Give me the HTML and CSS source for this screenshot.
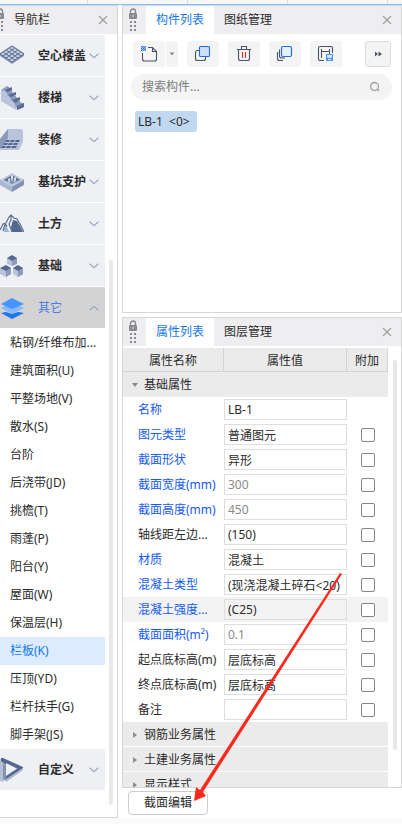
FILE: index.html
```html
<!DOCTYPE html>
<html lang="zh-CN">
<head>
<meta charset="utf-8">
<meta name="viewport" content="width=device-width, initial-scale=1">
<title>构件与属性</title>
<link rel="stylesheet" href="styles.css">
</head>
<body>
<svg class="defs" aria-hidden="true">
  <symbol id="lock" viewBox="0 0 10 24">
    <path d="M2.500 6V3.500a2.500 2.500 0 0 1 5 0V6" fill="none" stroke="#888a8d" stroke-width="1.400"/>
    <rect x="1" y="5" width="8" height="6" rx="1" fill="#888a8d"/>
    <rect x="4.500" y="7" width="1" height="2" fill="#eee"/>
    <path d="M2 13h2v2H2zM6 13h2v2H6zM2 17h2v2H2zM6 17h2v2H6zM2 21h2v2H2zM6 21h2v2H6z" fill="#888a8d"/>
  </symbol>
  <symbol id="close" viewBox="0 0 10 10"><path d="M1 1l8 8M9 1L1 9" fill="none" stroke="#a0a0a0" stroke-width="1.300"/></symbol>
  <symbol id="chevron" viewBox="0 0 10 6"><path d="M.6 .8L5 4.800 9.400 .8" fill="none" stroke="#9ba9c1" stroke-width="1.200"/></symbol>
</svg>
<div class="ribbon"><i></i><i></i><i></i><i></i></div>
<main class="workspace">
  <nav class="panel nav">
    <header class="bar nav-bar">
      <svg class="lock" aria-hidden="true"><use href="#lock"/></svg>
      <h2>导航栏</h2>
      <button class="close" aria-label="关闭导航栏"><svg><use href="#close"/></svg></button>
    </header>
    <div class="nav-body">
      <div class="nav-list">
        <button class="category">
          <svg class="pic" viewBox="0 0 24 24"><path d="M0 10v2l12 8 12-8v-2z" fill="#8b9bbb"/><path d="M0 10l12-8 12 8-12 8z" fill="#d3dbe9"/><path d="M0 10l12-8M3 12l12-8M6 14l12-8M9 16l12-8M12 18l12-8M12 2l12 8M9 4l12 8M6 6l12 8M3 8l12 8M0 10l12 8" fill="none" stroke="#647599" stroke-width="1.200"/></svg>
          <span>空心楼盖</span><svg class="chev"><use href="#chevron"/></svg></button>
        <button class="category">
          <svg class="pic" viewBox="0 0 24 24"><path d="M1 4l4-1 3 5 4 2 1 4 4 1 1 5-2 4L1 15z" fill="#b9c4da"/><path d="M5 3l7 1v3l-4 3zM8 9l8 1v3l-4 2zM13 14l7 1v3l-4 3zM17 21l7-3v3l-7 3z" fill="#8b9bbb"/><path d="M1 4l6-4 5 3-5 3-2-1zM7 9l5-3 4 2-5 3zM11 14l5-3 4 2-5 3zM15 20l5-4 4 2-6 4z" fill="#8b9bbb"/><path d="M5 4l7-3v3L7 6zM8 9l8-3v3l-5 2zM12 14l8-3v3l-5 3zM17 20l7-3v4l-7 3z" fill="#586b91"/></svg>
          <span>楼梯</span><svg class="chev"><use href="#chevron"/></svg></button>
        <button class="category">
          <svg class="pic" viewBox="0 0 24 24"><path d="M8 1h14l1 2v11l-4 8H0V11z" fill="#b9c4da"/><path d="M8 1v9L0 21V11z" fill="#8b9bbb"/><path d="M6 12h4l-1 2H5zM11 12h4l-1 2h-4zM16 12h4l-1 2h-4zM4 15h4l-1 2H3zM9 15h4l-1 2H8zM14 15h4l-1 2h-4zM2 18h4l-1 2H1zM7 18h4l-1 2H6zM12 18h5l-1 2h-5z" fill="#53678f"/></svg>
          <span>装修</span><svg class="chev"><use href="#chevron"/></svg></button>
        <button class="category">
          <svg class="pic" viewBox="0 0 24 24"><path d="M0 9v6l12 7V14z" fill="#aab7d0"/><path d="M24 9v6l-12 7V14z" fill="#8292b3"/><path d="M0 10l12-7 12 7-12 7z" fill="#bcc8dc"/><path d="M4 10l8-5 8 5-8 4z" fill="#586b91"/><path d="M8 9l2-1v4l-2 1zM11 6l2-1v5l-2 1zM14 8l2-1v4l-2 2z" fill="#e4eaf4"/><path d="M6 11l6-3 6 3-6 3z" fill="#a0aec9" opacity=".6"/></svg>
          <span>基坑支护</span><svg class="chev"><use href="#chevron"/></svg></button>
        <button class="category">
          <svg class="pic" viewBox="0 0 24 24"><path d="M13 8l4 1 3 5 3 6H12l-1-5z" fill="#53678f"/><path d="M5 12l2 2 1 4 2 2H4z" fill="#a5b2cc"/><path d="M0 18l3-6 3-1 3-6 2-2 3 3 3 1 3 5 4 8M3 19l2-7 2 2M11 4v4l-2 4 3 8" fill="none" stroke="#53678f" stroke-width="1.100"/></svg>
          <span>土方</span><svg class="chev"><use href="#chevron"/></svg></button>
        <button class="category">
          <svg class="pic" viewBox="0 0 24 24"><path d="M7 4l5-2 5 2v6l-5 2-5-2zM0 14l6-2 5 2v6l-5 3-6-3zM13 14l5-2 5 2v6l-5 3-5-3z" fill="#b9c4da"/><path d="M12 7l5-3v6l-5 2zM6 17l5-3v6l-5 3zM18 17l5-3v6l-5 3z" fill="#8c9bbb"/><path d="M7 4l5-3 5 3-5 3zM0 14l6-3 5 3-5 3zM13 14l5-3 5 3-5 3z" fill="#53678f"/></svg>
          <span>基础</span><svg class="chev"><use href="#chevron"/></svg></button>
        <button class="category open" aria-expanded="true">
          <svg class="pic" viewBox="0 0 24 24"><path d="M1 17l5-1 6 2 6-2 6 1-12 6z" fill="#1b74f0"/><path d="M1 12l11-6 12 6-12 6z" fill="#83b9fb"/><path d="M1 8l11-6 12 6-12 5z" fill="#4496fb"/></svg>
          <span>其它</span><svg class="chev"><use href="#chevron"/></svg></button>
        <ul class="items">
          <li><a href="#">粘钢/纤维布加...</a></li>
          <li><a href="#">建筑面积(U)</a></li>
          <li><a href="#">平整场地(V)</a></li>
          <li><a href="#">散水(S)</a></li>
          <li><a href="#">台阶</a></li>
          <li><a href="#">后浇带(JD)</a></li>
          <li><a href="#">挑檐(T)</a></li>
          <li><a href="#">雨蓬(P)</a></li>
          <li><a href="#">阳台(Y)</a></li>
          <li><a href="#">屋面(W)</a></li>
          <li><a href="#">保温层(H)</a></li>
          <li><a href="#" class="current">栏板(K)</a></li>
          <li><a href="#">压顶(YD)</a></li>
          <li><a href="#">栏杆扶手(G)</a></li>
          <li><a href="#">脚手架(JS)</a></li>
        </ul>
        <button class="category">
          <svg class="pic" viewBox="0 0 24 24"><path d="M0 1l6 5v13l-3 5-3-1z" fill="#b4c0d6"/><path d="M3 6l3 2v15l-3-2z" fill="#8292b3"/><path d="M1 0h2l20 9v1l-5 1L6 5v2L1 3z" fill="#53678f"/><path d="M6 18l12-8 5-1v1L6 22z" fill="#53678f"/><path d="M6 21l17-11v2L6 24z" fill="#a9b6ce"/></svg>
          <span>自定义</span><svg class="chev"><use href="#chevron"/></svg></button>
      </div>
      <div class="track nav-track"></div>
    </div>
  </nav>
  <div class="column">
    <section class="panel components">
      <header class="bar">
        <svg class="lock" aria-hidden="true"><use href="#lock"/></svg>
        <button class="tab active">构件列表</button>
        <button class="tab">图纸管理</button>
        <button class="close" aria-label="关闭构件列表"><svg><use href="#close"/></svg></button>
      </header>
      <div class="tools">
        <div class="split">
          <button class="tool" aria-label="新建"><svg viewBox="0 0 18 18"><path d="M2.500 8v6a2 2 0 0 0 2 2h10a2 2 0 0 0 2-2V6.500l-4-4H8M12.500 2.500v4h4" fill="none" stroke="#4b5467" stroke-width="1.100"/><path d="M1 1h5v5H1z" fill="#a9cbf8"/><path d="M1 1h1v1H1zM3 1h1v1H3zM5 1h1v1H5zM2 2h1v1H2zM4 2h1v1H4zM1 3h1v1H1zM3 3h1v1H3zM5 3h1v1H5zM2 4h1v1H2zM4 4h1v1H4zM1 5h1v1H1zM3 5h1v1H3zM5 5h1v1H5z" fill="#1d6fe8"/></svg></button>
          <button class="tool drop" aria-label="新建选项"><svg viewBox="0 0 6 4"><path d="M.5 .5h5L3 3.500z" fill="#8a8a8a"/></svg></button>
        </div>
        <button class="tool" aria-label="复制"><svg viewBox="0 0 18 18"><path d="M5 5.500H3.500a2 2 0 0 0-2 2v6a2 2 0 0 0 2 2h6a2 2 0 0 0 2-2V12" fill="none" stroke="#4b5467" stroke-width="1.100"/><rect x="5.500" y="1.500" width="10" height="10" rx="1" fill="#cfe0f8" stroke="#1d6fe8" stroke-width="1.100"/></svg></button>
        <button class="tool" aria-label="删除"><svg viewBox="0 0 18 18"><path d="M2 4.500h14M6.500 4V1.500h5V4M3.500 5v8.500a2 2 0 0 0 2 2h7a2 2 0 0 0 2-2V5" fill="none" stroke="#4b5467" stroke-width="1.100"/><path d="M7.500 7v6M10.500 7v6" stroke="#ea2b2b" stroke-width="1.100"/></svg></button>
        <button class="tool" aria-label="层间复制"><svg viewBox="0 0 18 18"><path d="M3.500 4.500v6.500a2 2 0 0 0 2 2H9M1.500 7v6.500a2 2 0 0 0 2 2H7" fill="none" stroke="#4b5467" stroke-width="1.100"/><rect x="5.500" y="1.500" width="10" height="10" rx="1.500" fill="#e6f1ff" stroke="#1d6fe8" stroke-width="1.200"/></svg></button>
        <button class="tool" aria-label="存档"><svg viewBox="0 0 18 18"><path d="M7 15.500H3A1.500 1.500 0 0 1 1.500 14V3A1.500 1.500 0 0 1 3 1.500h11A1.500 1.500 0 0 1 15.500 3v5M4.500 4v9M12.500 4v5M4.500 6.500h8" fill="none" stroke="#4b5467" stroke-width="1.100"/><path d="M9 9h7v7H9z" fill="#4c94f5"/><path d="M10 10h5v2l-1 1h-3l-1-1z" fill="#d5e6fc"/><path d="M11 14h3v1h-3z" fill="#e6f1ff"/></svg></button>
        <button class="tool more" aria-label="更多"><svg viewBox="0 0 18 18"><path d="M6 6.500L9 9l-3 2.500zM9.500 6.500l3.500 2.500-3.500 2.500z" fill="#4b5467"/></svg></button>
      </div>
      <label class="search">
        <input type="text" placeholder="搜索构件..." aria-label="搜索构件">
        <svg viewBox="0 0 12 12"><circle cx="5.500" cy="5.500" r="4" fill="none" stroke="#a3a3a3" stroke-width="1.300"/><path d="M8 8l2 2" stroke="#a3a3a3" stroke-width="1.500"/></svg>
      </label>
      <button class="component">LB-1&nbsp; &lt;0&gt;</button>
    </section>
    <section class="panel properties">
      <header class="bar">
        <svg class="lock" aria-hidden="true"><use href="#lock"/></svg>
        <button class="tab active">属性列表</button>
        <button class="tab">图层管理</button>
        <button class="close" aria-label="关闭属性列表"><svg><use href="#close"/></svg></button>
      </header>
      <div class="sheet">
        <table>
          <colgroup><col class="c-name"><col><col class="c-extra"></colgroup>
          <thead><tr><th>属性名称</th><th>属性值</th><th>附加</th></tr></thead>
          <tbody>
            <tr class="group open"><td colspan="3"><button>基础属性</button></td></tr>
            <tr class="key"><td><label for="p1">名称</label></td><td><input type="text" id="p1" value="LB-1"></td><td></td></tr>
            <tr class="key"><td><label for="p2">图元类型</label></td><td><input type="text" id="p2" value="普通图元"></td><td><input type="checkbox" aria-label="附加图元类型"></td></tr>
            <tr class="key"><td><label for="p3">截面形状</label></td><td><input type="text" id="p3" value="异形"></td><td><input type="checkbox" aria-label="附加截面形状"></td></tr>
            <tr class="key"><td><label for="p4">截面宽度(mm)</label></td><td><input type="text" id="p4" value="300" readonly></td><td><input type="checkbox" aria-label="附加截面宽度"></td></tr>
            <tr class="key"><td><label for="p5">截面高度(mm)</label></td><td><input type="text" id="p5" value="450" readonly></td><td><input type="checkbox" aria-label="附加截面高度"></td></tr>
            <tr><td><label for="p6">轴线距左边...</label></td><td><input type="text" id="p6" value="(150)"></td><td><input type="checkbox" aria-label="附加轴线距左边"></td></tr>
            <tr class="key"><td><label for="p7">材质</label></td><td><input type="text" id="p7" value="混凝土"></td><td><input type="checkbox" aria-label="附加材质"></td></tr>
            <tr class="key"><td><label for="p8">混凝土类型</label></td><td><input type="text" id="p8" value="(现浇混凝土碎石&lt;20)"></td><td><input type="checkbox" aria-label="附加混凝土类型"></td></tr>
            <tr class="key hover"><td><label for="p9">混凝土强度...</label></td><td><input type="text" id="p9" value="(C25)"></td><td><input type="checkbox" aria-label="附加混凝土强度"></td></tr>
            <tr class="key"><td><label for="p10">截面面积(m²)</label></td><td><input type="text" id="p10" value="0.1" readonly></td><td><input type="checkbox" aria-label="附加截面面积"></td></tr>
            <tr><td><label for="p11">起点底标高(m)</label></td><td><input type="text" id="p11" value="层底标高"></td><td><input type="checkbox" aria-label="附加起点底标高"></td></tr>
            <tr><td><label for="p12">终点底标高(m)</label></td><td><input type="text" id="p12" value="层底标高"></td><td><input type="checkbox" aria-label="附加终点底标高"></td></tr>
            <tr><td><label for="p13">备注</label></td><td><input type="text" id="p13" value=""></td><td><input type="checkbox" aria-label="附加备注"></td></tr>
            <tr class="group"><td colspan="3"><button>钢筋业务属性</button></td></tr>
            <tr class="group"><td colspan="3"><button>土建业务属性</button></td></tr>
            <tr class="group"><td colspan="3"><button>显示样式</button></td></tr>
          </tbody>
        </table>
        <div class="track sheet-track"></div>
      </div>
    </section>
    <footer class="actions"><button>截面编辑</button></footer>
  </div>
</main>
<div class="status"></div>
<svg class="arrow" viewBox="0 0 150 232" aria-hidden="true"><path d="M147 1l2 1L10 220l3 4L1 229l2-14 4 3z" fill="#fb2a1c"/></svg>
</body>
</html>
```

FILE: styles.css
```css
* { box-sizing: border-box; }

body {
  position: relative;
  display: flex;
  flex-direction: column;
  height: 100vh;
  margin: 0;
  overflow: hidden;
  background: #fff;
  color: #2b2b2b;
  font: 12px/20px "Noto Sans", "Noto Sans CJK SC", sans-serif;
}

button, input {
  margin: 0;
  padding: 0;
  border: 0;
  background: none;
  color: inherit;
  font: inherit;
}

svg { display: block; flex: none; }
.defs { position: absolute; width: 0; height: 0; }

.ribbon {
  display: flex;
  flex: none;
  height: 5px;
  border-bottom: 1px solid #86bdf4;
  background: #f3f8fc;
}
.ribbon i { flex: 0 0 100px; border-right: 1px solid #d5dce2; }
.ribbon i:first-child { flex-basis: 88px; }

.workspace { display: flex; flex: 1; gap: 4px; min-height: 0; }
.panel { border: 1px solid #d6d6d6; }

.bar {
  display: flex;
  flex: none;
  align-items: center;
  height: 28px;
  background: #eeeef0;
}
.lock { width: 10px; height: 24px; margin: 0 8px 0 5px; }
.close { margin-left: auto; padding: 0 9px; }
.close svg { width: 10px; height: 10px; }
.tab { align-self: stretch; padding: 0 10px; }
.tab.active { background: #fff; color: #1677ea; }

/* navigation */
.nav {
  display: flex;
  flex: 0 0 118px;
  flex-direction: column;
  border-left: 0;
  overflow: hidden;
}
.nav-bar .lock { margin: 0 9px 0 -5px; }
.nav-bar h2 { margin: 0; font-size: 12px; font-weight: 400; }
.nav-body { display: flex; flex: 1; padding-top: 1px; min-height: 0; }
.nav-list { flex: 0 0 105px; }
.category {
  display: flex;
  align-items: center;
  width: 100%;
  height: 41px;
  margin-bottom: 1px;
  background: #eff0f4;
  font-weight: 700;
  text-align: left;
}
.category span { flex: 1; white-space: nowrap; }
.pic { width: 24px; height: 24px; margin-right: 14px; }
.chev { width: 10px; height: 6px; margin-right: 6px; }
.category.open { background: #d3d3d3; color: #4a7be0; font-weight: 400; }
.category.open .chev { transform: rotate(180deg); }
.items { margin: 0; padding: 0; list-style: none; }
.items a {
  display: block;
  padding: 4px 0 4px 10px;
  color: inherit;
  text-decoration: none;
  white-space: nowrap;
}
.items .current { background: #dcebff; color: #1478f0; }

.track { flex: none; width: 4px; border-radius: 2px; background: #e8e8e8; }
.nav-track { margin: 225px 0 12px 4px; }

/* right column */
.column { display: flex; flex: 1; flex-direction: column; min-width: 0; }
.components { flex: 0 0 308px; }

.tools { display: flex; gap: 9px; padding: 7px 10px; }
.tool {
  display: flex;
  align-items: center;
  justify-content: center;
  width: 32px;
  height: 26px;
  border-radius: 3px;
  background: #f4f4f4;
}
.tool svg { width: 18px; height: 18px; }
.split { display: flex; gap: 1px; }
.drop { width: 12px; }
.drop svg { width: 6px; height: 4px; }
.more { width: 26px; margin-left: auto; border: 1px solid #dcdcdc; }

.search {
  display: flex;
  align-items: center;
  height: 26px;
  margin: 0 9px 11px 8px;
  padding: 0 11px;
  border-radius: 13px;
  background: #f4f4f4;
}
.search input { flex: 1; min-width: 0; outline: 0; }
.search input::placeholder { color: #7c7c7c; opacity: 1; }
.search svg { width: 12px; height: 12px; }
.component {
  display: block;
  min-width: 62px;
  height: 21px;
  margin-left: 12px;
  padding: 0 3px;
  border-radius: 3px;
  background: #c1d8f1;
  text-align: left;
}

/* property sheet */
.properties {
  display: flex;
  flex: 1;
  flex-direction: column;
  min-height: 0;
  margin-top: 4px;
}
.sheet { display: flex; flex: 1; min-height: 0; padding-top: 2px; overflow: hidden; }
table {
  flex: 1;
  align-self: flex-start;
  min-width: 0;
  border-spacing: 0;
  table-layout: fixed;
}
.c-name { width: 101px; }
.c-extra { width: 41px; }
th {
  height: 24px;
  padding: 2px 0 0;
  border-right: 1px solid #d4d4d4;
  border-bottom: 1px solid #d4d4d4;
  background: #ebebeb;
  font-weight: 400;
}
td { height: 25px; padding: 0; white-space: nowrap; }
td:first-child { padding-left: 15px; }
td label { display: block; }
.key label { color: #145af8; }
.hover td { background: #f3f3f3; }
td input[type="text"] {
  display: block;
  width: 100%;
  height: 21px;
  padding: 0 3px;
  border: 1px solid #dedede;
  background: #fff;
}
.hover input[type="text"] { background: #f3f3f3; }
td input[type="text"]:read-only { color: #8a8a8a; }
input[type="checkbox"] {
  display: block;
  width: 14px;
  height: 14px;
  margin: 0 auto;
  appearance: none;
  border: 1px solid #858585;
  border-radius: 2px;
  background: #fff;
}
.group td:first-child {
  padding: 2px 0 0;
  border-bottom: 1px solid #fff;
  background: #ebebeb;
}
.group.open td:first-child { border-bottom-color: #ebebeb; }
.group button { display: flex; align-items: center; padding-left: 10px; }
.group button::before {
  margin-right: 7px;
  border: 3px solid transparent;
  border-right-width: 0;
  border-left: 4px solid #8a8a8a;
  content: "";
}
.group.open button { padding-left: 9px; }
.group.open button::before {
  margin-right: 6px;
  border: 3px solid transparent;
  border-top: 4px solid #8a8a8a;
  border-bottom-width: 0;
}
.sheet-track { margin: 12px 4px 37px 5px; }

.actions { flex: none; padding: 3px 6px; }
.actions button {
  display: block;
  width: 80px;
  height: 24px;
  border: 1px solid #cdcdcd;
  border-radius: 4px;
  background: #fff;
}
.status { flex: none; height: 6px; background: #fafafa; }

/* callout drawn over the sheet */
.arrow {
  position: absolute;
  top: 572px;
  left: 193px;
  width: 150px;
  height: 232px;
  pointer-events: none;
}
```
